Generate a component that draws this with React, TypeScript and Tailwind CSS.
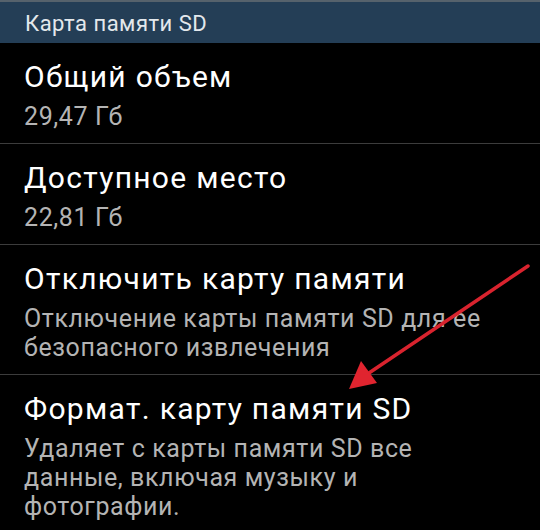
const rows = [
    { title: 'Общий объем', sub: ['29,47 Гб'] },
    { title: 'Доступное место', sub: ['22,81 Гб'] },
    { title: 'Отключить карту памяти', sub: ['Отключение карты памяти SD для ее', 'безопасного извлечения'] },
    { title: 'Формат. карту памяти SD', sub: ['Удаляет с карты памяти SD все', 'данные, включая музыку и', 'фотографии.'] },
];

export default function App() {
    return (
        <div className="relative w-[540px] h-[530px] overflow-hidden bg-black font-['Roboto',sans-serif]">
            <div className="h-[2px] bg-[#56626c]" />
            <div className="h-[41px] bg-[#243e56] pl-[25px] pt-[3px] text-[22px] leading-[38px] tracking-[0.5px] text-[#e3e8ec]">
                Карта памяти SD
            </div>

            {rows.map((row, i) => (
                <div key={row.title} className={i > 0 ? 'border-t border-[#3c3c3c]' : ''}>
                    <div className="pl-[24px] pt-[17px] pb-[12px]">
                        <div className="text-[30px] leading-[34px] tracking-[1.3px] text-white">{row.title}</div>
                        <div className="mt-[8px] text-[25px] leading-[29px] tracking-[0.6px] text-[#b4b4b4]">
                            {row.sub.map((line) => (
                                <div key={line}>{line}</div>
                            ))}
                        </div>
                    </div>
                </div>
            ))}

            {/* red annotation arrow */}
            <svg className="absolute inset-0 pointer-events-none" width="540" height="530" viewBox="0 0 540 530">
                <line x1="528" y1="266" x2="366" y2="375" stroke="#d9232e" strokeWidth="3.5" strokeLinecap="round" />
                <polygon points="349,389 361,361 377,383" fill="#e0242f" />
            </svg>
        </div>
    );
}
